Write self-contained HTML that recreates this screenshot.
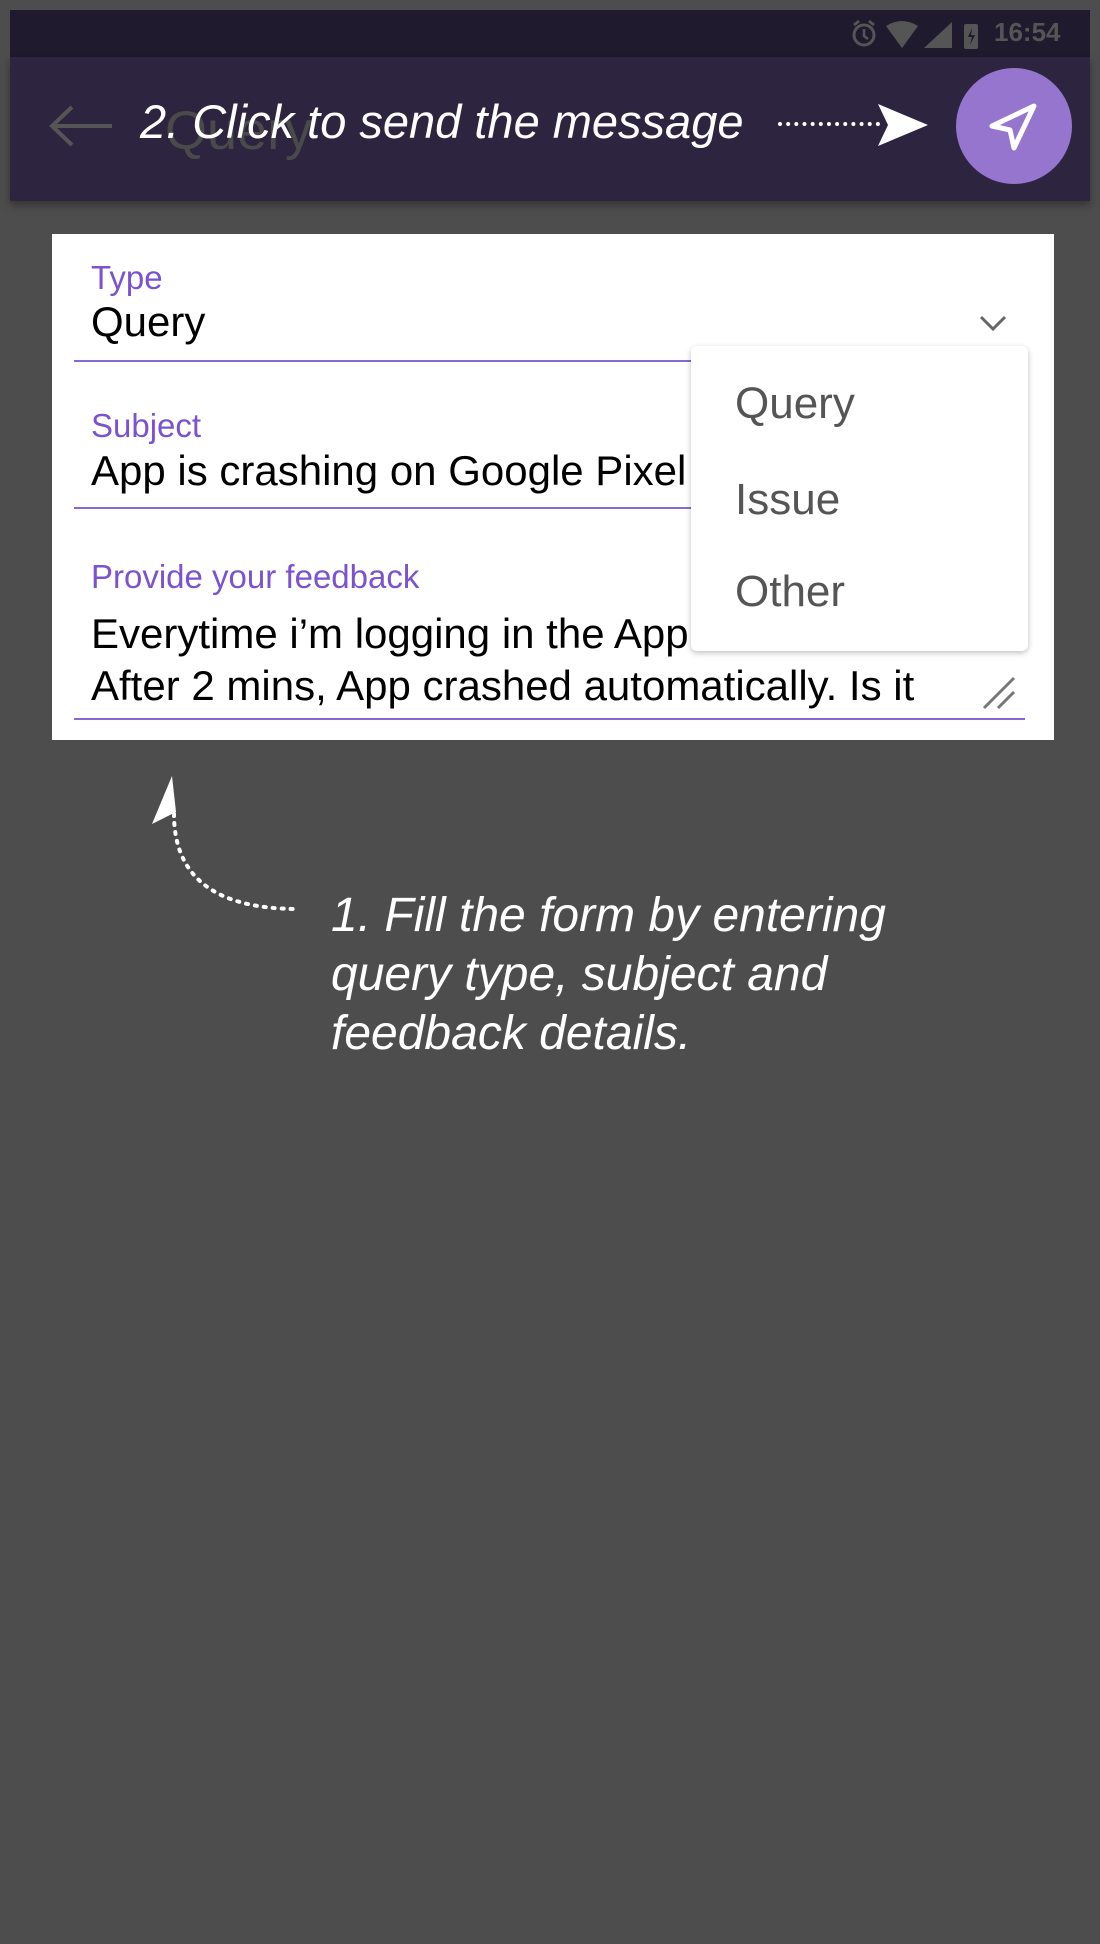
<!DOCTYPE html>
<html><head><meta charset="utf-8"><style>
*{margin:0;padding:0;box-sizing:border-box}
body{width:1100px;height:1944px;background:#4d4d4d;position:relative;overflow:hidden;font-family:"Liberation Sans",sans-serif}
.abs{position:absolute}
.lbl{color:#7b52d0;font-size:33px;left:91px}
.val{color:#000;font-size:42px;left:91px;white-space:nowrap}
.line{left:74px;width:951px;height:2px;background:#8a68d4}
.dd{color:#555;font-size:44px;left:735px}
</style></head><body>
<div class="abs" style="left:10px;top:10px;width:1080px;height:47px;background:#1f1a2e"></div>
<div class="abs" style="left:10px;top:57px;width:1080px;height:144px;background:#2d2540;box-shadow:0 4px 8px rgba(0,0,0,.35)"></div>
<svg class="abs" style="left:848px;top:18px" width="150" height="32" viewBox="0 0 150 32">
<circle cx="16" cy="17" r="10" fill="none" stroke="#555" stroke-width="3"/><path d="M16 11v7l4 3" stroke="#555" stroke-width="2.5" fill="none"/><path d="M6 7l5-4M26 7l-5-4" stroke="#555" stroke-width="3"/>
<path d="M38 8q16-10 32 0l-16 22z" fill="#555"/>
<path d="M76 30l28-26v26z" fill="#555"/>
<rect x="116" y="6" width="14" height="25" rx="2" fill="#555"/><path d="M124 10l-4 9h4l-2 8 5-10h-4z" fill="#1f1a2e"/>
</svg>
<div class="abs" style="left:994px;top:17px;color:#555;font-size:26px;font-weight:bold">16:54</div>
<svg class="abs" style="left:48px;top:104px" width="66" height="44"><path d="M4 22h60M24 3L4 22l20 19" stroke="#555" stroke-width="4" fill="none"/></svg>
<div class="abs" style="left:165px;top:100px;font-size:54px;color:#4a4a4a">Query</div>
<div class="abs" style="left:140px;top:94px;font-size:47px;color:#fff;font-style:italic;white-space:nowrap">2. Click to send the message</div>
<div class="abs" style="left:778px;top:122px;width:102px;border-top:4px dotted #fff"></div>
<svg class="abs" style="left:876px;top:102px" width="54" height="46"><path d="M2 2L52 23 2 44 12 23z" fill="#fff"/></svg>
<div class="abs" style="left:956px;top:68px;width:116px;height:116px;border-radius:50%;background:#9575cd"></div>
<svg class="abs" style="left:984px;top:96px" width="60" height="60" viewBox="0 0 60 60"><path d="M50 10L8 30l18 4 4 18z" fill="none" stroke="#fff" stroke-width="5" stroke-linejoin="round"/></svg>
<div class="abs" style="left:52px;top:234px;width:1002px;height:506px;background:#fff"></div>
<div class="abs lbl" style="top:259px">Type</div>
<div class="abs val" style="top:298px">Query</div>
<svg class="abs" style="left:978px;top:314px" width="30" height="20"><path d="M3 3l12 12 12-12" stroke="#666" stroke-width="3" fill="none"/></svg>
<div class="abs line" style="top:360px"></div>
<div class="abs lbl" style="top:407px">Subject</div>
<div class="abs val" style="top:447px">App is crashing on Google Pixel</div>
<div class="abs line" style="top:507px"></div>
<div class="abs lbl" style="top:558px">Provide your feedback</div>
<div class="abs val" style="top:610px">Everytime i’m logging in the App</div>
<div class="abs val" style="top:662px">After 2 mins, App crashed automatically. Is it</div>
<svg class="abs" style="left:980px;top:672px" width="40" height="40"><path d="M4 36L34 6M18 36L34 20" stroke="#777" stroke-width="3"/></svg>
<div class="abs line" style="top:718px"></div>
<div class="abs" style="left:691px;top:346px;width:337px;height:305px;background:#fff;border-radius:6px;box-shadow:0 2px 6px rgba(0,0,0,.25)"></div>
<div class="abs dd" style="top:379px">Query</div>
<div class="abs dd" style="top:475px">Issue</div>
<div class="abs dd" style="top:567px">Other</div>
<svg class="abs" style="left:150px;top:770px" width="160" height="180"><path d="M22 6L2 54l24-12z" fill="#fff"/><path d="M24 44q0 95 124 95" stroke="#fff" stroke-width="4" stroke-dasharray="2 7" stroke-linecap="round" fill="none"/></svg>
<div class="abs" style="left:331px;top:886px;font-size:48px;line-height:59px;color:#fff;font-style:italic">1. Fill the form by entering<br>query type, subject and<br>feedback details.</div>
</body></html>
